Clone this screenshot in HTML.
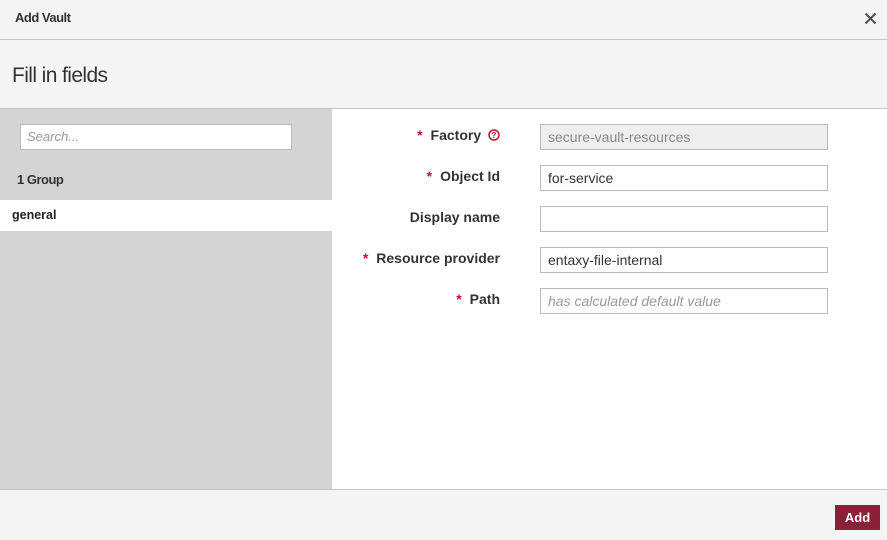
<!DOCTYPE html>
<html><head><style>
*{box-sizing:border-box;margin:0;padding:0}
body{width:887px;height:540px;overflow:hidden;background:#fff;font-family:"Liberation Sans",sans-serif;position:relative;color:#333}
.hdr{position:absolute;left:0;top:0;width:887px;height:40px;background:#f4f4f4;border-bottom:1px solid #c4c4c4}
.hdr .t{position:absolute;left:15px;top:10px;font-size:13px;font-weight:bold;letter-spacing:-0.5px;color:#333}
.ttl{position:absolute;left:0;top:40px;width:887px;height:69px;background:#f4f4f4;border-bottom:1px solid #c4c4c4}
.ttl span{position:absolute;left:12px;top:24px;font-size:21px;letter-spacing:-0.6px;color:#333}
.left{position:absolute;left:0;top:109px;width:332px;height:380px;background:#d4d4d4}
.search{position:absolute;left:20px;top:15px;width:272px;height:26px;background:#fff;border:1px solid #bbb;font-size:13px;font-style:italic;color:#999;padding:4px 6px}
.grp{position:absolute;left:17px;top:63px;font-size:13px;font-weight:bold;letter-spacing:-0.5px}
.gen{position:absolute;left:0;top:91px;width:332px;height:31px;background:#fff;font-size:12.5px;font-weight:bold;padding:8px 12px;color:#222}
.lbl{position:absolute;right:387px;font-size:14px;font-weight:bold;color:#333;white-space:nowrap}
.lbl b{color:#c8102e;margin-right:8px}
.inp{position:absolute;left:540px;width:288px;height:26px;border:1px solid #bbb;background:#fff;font-size:14px;padding:4px 7px;color:#333}
.foot{position:absolute;left:0;top:489px;width:887px;height:51px;background:#f4f4f4;border-top:1px solid #c4c4c4}
.btn{position:absolute;left:835px;top:15px;width:45px;height:25px;background:#8b2038;color:#fff;font-size:13px;font-weight:bold;text-align:center;line-height:25px}
</style></head><body>
<div class="hdr"><span class="t">Add Vault</span>
<svg style="position:absolute;left:864px;top:12px" width="13" height="13" viewBox="0 0 13 13"><path d="M1.5 1.5L11.5 11.5M11.5 1.5L1.5 11.5" stroke="#505050" stroke-width="2"/></svg></div>
<div class="ttl"><span>Fill in fields</span></div>
<div class="left"><div class="search">Search...</div><div class="grp">1 Group</div><div class="gen">general</div></div>
<div class="lbl" style="top:127px"><b>*</b>Factory <svg style="vertical-align:-1px;margin-left:3px" width="12" height="12" viewBox="0 0 12 12"><circle cx="6" cy="6" r="5" fill="none" stroke="#c8102e" stroke-width="1.5"/><text x="6" y="9" font-size="8" font-weight="bold" fill="#c8102e" text-anchor="middle" font-family="Liberation Sans">?</text></svg></div>
<div class="lbl" style="top:168px"><b>*</b>Object Id</div>
<div class="lbl" style="top:209px">Display name</div>
<div class="lbl" style="top:250px"><b>*</b>Resource provider</div>
<div class="lbl" style="top:291px"><b>*</b>Path</div>
<div class="inp" style="top:124px;background:#eee;color:#888">secure-vault-resources</div>
<div class="inp" style="top:165px">for-service</div>
<div class="inp" style="top:206px"></div>
<div class="inp" style="top:247px">entaxy-file-internal</div>
<div class="inp" style="top:288px;font-style:italic;color:#999">has calculated default value</div>
<div class="foot"><div class="btn">Add</div></div>
</body></html>
